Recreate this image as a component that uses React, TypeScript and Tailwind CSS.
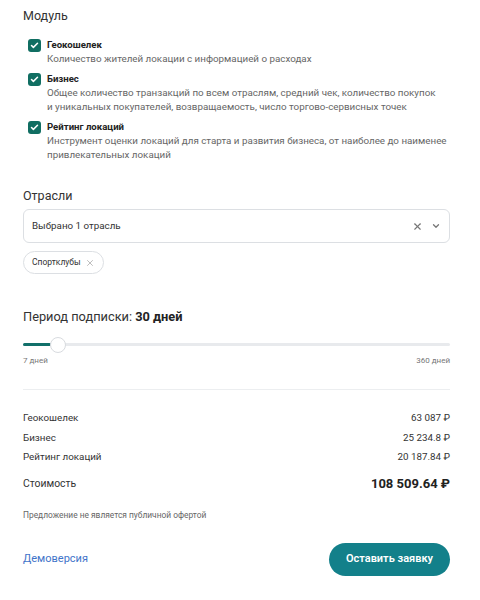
import { Check, X, ChevronDown } from "lucide-react"

const modules = [
  {
    title: "Геокошелек",
    lines: ["Количество жителей локации с информацией о расходах"],
  },
  {
    title: "Бизнес",
    lines: [
      "Общее количество транзакций по всем отраслям, средний чек, количество покупок",
      "и уникальных покупателей, возвращаемость, число торгово-сервисных точек",
    ],
  },
  {
    title: "Рейтинг локаций",
    lines: [
      "Инструмент оценки локаций для старта и развития бизнеса, от наиболее до наименее",
      "привлекательных локаций",
    ],
  },
]

const prices = [
  { label: "Геокошелек", value: "63 087 ₽" },
  { label: "Бизнес", value: "25 234.8 ₽" },
  { label: "Рейтинг локаций", value: "20 187.84 ₽" },
]

export default function App() {
  return (
    <div
      className="h-[600px] w-[480px] bg-white pl-[23px] pr-[30px] pt-[6px] text-[#2b2b2b]"
      style={{ fontFamily: 'Roboto, "Noto Sans", sans-serif' }}
    >
      <h2 className="text-[12.5px] leading-[20px] text-[#333]">Модуль</h2>

      <div className="mt-[12px] flex flex-col gap-[6px] pl-[5px]">
        {modules.map((m) => (
          <div key={m.title} className="flex gap-[6px]">
            <div className="mt-[1px] flex h-[13px] w-[13px] shrink-0 items-center justify-center rounded-[3px] bg-[#106e62]">
              <Check className="h-[9px] w-[9px] text-white" strokeWidth={4} />
            </div>
            <div>
              <div className="text-[9.6px] font-bold leading-[14px] text-[#222]">{m.title}</div>
              {m.lines.map((l) => (
                <div key={l} className="whitespace-nowrap text-[9.8px] leading-[14px] text-[#666]">
                  {l}
                </div>
              ))}
            </div>
          </div>
        ))}
      </div>

      <h2 className="mt-[24px] text-[12.5px] leading-[20px] text-[#333]">Отрасли</h2>

      <div className="mt-[3px] flex h-[34px] items-center justify-between rounded-[6px] border border-[#dcdfe3] px-[8px]">
        <span className="text-[9.8px] text-[#333]">Выбрано 1 отрасль</span>
        <div className="flex items-center gap-[8px] text-[#777]">
          <X className="h-[11px] w-[11px]" strokeWidth={2.5} />
          <ChevronDown className="h-[10px] w-[10px]" strokeWidth={3} />
        </div>
      </div>

      <div className="mt-[8px] inline-flex h-[23px] items-center gap-[4px] rounded-full border border-[#dcdfe3] px-[8px]">
        <span className="text-[8.5px] text-[#333]">Спортклубы</span>
        <X className="h-[10px] w-[10px] text-[#b0b0b0]" strokeWidth={2} />
      </div>

      <h2 className="mt-[33px] text-[12.8px] leading-[20px] text-[#333]">
        Период подписки: <span className="font-bold text-[#222]">30 дней</span>
      </h2>

      <div className="relative mt-[10px] h-[16px]">
        <div className="absolute left-0 right-0 top-[6px] h-[3px] rounded-full bg-[#e8eaed]" />
        <div className="absolute left-0 top-[6px] h-[3px] w-[28px] rounded-full bg-[#12706a]" />
        <div className="absolute left-[27px] top-0 h-[16px] w-[16px] rounded-full border border-[#d8dbdf] bg-white" />
      </div>
      <div className="mt-[2px] flex justify-between text-[8px] leading-[12px] text-[#777]">
        <span>7 дней</span>
        <span>360 дней</span>
      </div>

      <div className="mt-[22px] h-px bg-[#eceef0]" />

      <div className="mt-[21px] flex flex-col gap-[5.5px]">
        {prices.map((p) => (
          <div key={p.label} className="flex justify-between text-[9.8px] leading-[14px] text-[#333]">
            <span>{p.label}</span>
            <span>{p.value}</span>
          </div>
        ))}
      </div>

      <div className="mt-[10px] flex h-[20px] items-center justify-between">
        <span className="text-[10.4px] text-[#333]">Стоимость</span>
        <span className="text-[13px] font-bold text-[#222]">108 509.64 ₽</span>
      </div>

      <div className="mt-[15px] text-[8.4px] leading-[12px] text-[#666]">
        Предложение не является публичной офертой
      </div>

      <div className="mt-[22px] flex items-center justify-between">
        <a className="text-[11px] text-[#3f74c9]">Демоверсия</a>
        <button className="h-[33px] rounded-full bg-[#13808a] px-[17px] text-[11px] font-semibold text-white">
          Оставить заявку
        </button>
      </div>
    </div>
  )
}
